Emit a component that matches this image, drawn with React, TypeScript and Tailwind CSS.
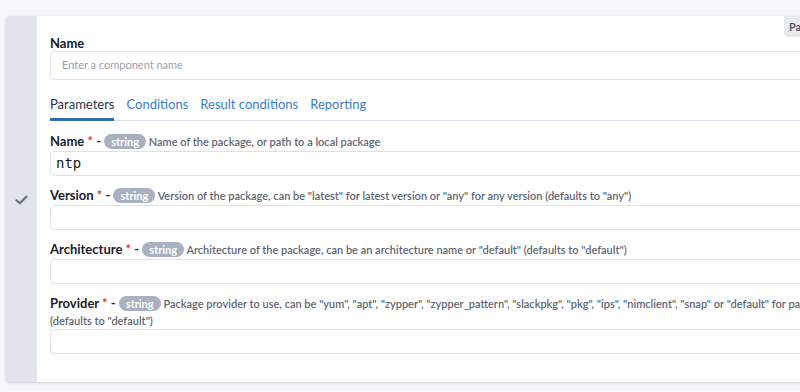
import React from 'react';

type Param = {
  name: string;
  description: string;
  defaults?: string;
  value?: string;
};

const params: Param[] = [
  { name: 'Name', description: 'Name of the package, or path to a local package', value: 'ntp' },
  { name: 'Version', description: 'Version of the package, can be "latest" for latest version or "any" for any version', defaults: '(defaults to "any")' },
  { name: 'Architecture', description: 'Architecture of the package, can be an architecture name or "default"', defaults: '(defaults to "default")' },
  {
    name: 'Provider',
    description:
      'Package provider to use, can be "yum", "apt", "zypper", "zypper_pattern", "slackpkg", "pkg", "ips", "nimclient", "snap" or "default" for package',
    defaults: '(defaults to "default")',
  },
];

const tabs = ['Parameters', 'Conditions', 'Result conditions', 'Reporting'];

const CheckIcon = () => (
  <svg width="13" height="10" viewBox="0 0 13 10" fill="none">
    <path d="M1.5 5.2 L4.8 8.3 L11.5 1.6" stroke="#6b7280" strokeWidth="2.2" strokeLinecap="round" strokeLinejoin="round" />
  </svg>
);

const ParamField = ({ param }: { param: Param }) => (
  <div className="flex flex-col">
    <div className="w-[820px] text-[11px] leading-[16px] text-[#5f6673] font-semibold">
      <span className="text-[13px] leading-[19px] font-bold text-[#1b212b]">{param.name}</span>
      <span className="text-[13px] leading-[19px] font-bold text-[#e8372d]"> *</span>
      <span className="text-[13px] leading-[19px] font-bold text-[#1b212b]"> - </span>
      <span className="inline-block rounded-full bg-[#a8b0c1] px-[7px] text-[11px] leading-[15px] font-bold text-white">
        string
      </span>{' '}
      {param.description}
      {param.defaults && (
        <>
          {' '}
          <span className="whitespace-nowrap">{param.defaults}</span>
        </>
      )}
    </div>
    <div className="flex h-[25px] w-full items-center rounded-[4px] border border-[#d9e0ee] bg-white px-[5px]">
      {param.value && (
        <span className="font-['DejaVu_Sans_Mono',monospace] text-[14px] text-[#1b212b]">{param.value}</span>
      )}
    </div>
  </div>
);

export default function App() {
  return (
    <div className="h-[392px] w-[800px] overflow-hidden bg-[#f6f7fa] font-['Lato','Noto_Sans',sans-serif]">
      <div className="relative ml-[6px] mt-[16px] flex w-[1000px] rounded-tl-[3px] rounded-bl-[3px] shadow-[0_1px_3px_rgba(120,130,160,0.35)]">
        {/* status strip */}
        <div className="flex w-[31px] shrink-0 items-center justify-center rounded-l-[3px] bg-[#e1e4eb] pt-[2px]">
          <CheckIcon />
        </div>

        <div className="flex flex-1 flex-col bg-white pl-[13px] pr-[40px] pt-[19px] pb-[28px]">
          <label className="text-[13px] font-bold leading-[16px] text-[#1b212b]">Name</label>
          <div className="flex h-[29px] items-center rounded-[4px] border border-[#d9e0ee] px-[11px]">
            <span className="text-[11px] text-[#9aa0a9]">Enter a component name</span>
          </div>

          <div className="mt-[15px] flex gap-[12px] border-b border-[#dbe2ef]">
            {tabs.map((t, i) => (
              <div
                key={t}
                className={`-mb-[1px] pb-[5px] text-[13px] leading-[18px] ${
                  i === 0 ? 'border-b-[3px] border-[#2e6eab] text-[#2c333d]' : 'border-b-[3px] border-transparent text-[#3a7dc1]'
                }`}
              >
                {t}
              </div>
            ))}
          </div>

          <div className="mt-[11px] flex flex-col gap-[10px]">
            {params.map(p => (
              <ParamField key={p.name} param={p} />
            ))}
          </div>
        </div>

        <div className="absolute left-[778px] top-0 h-[21px] rounded-bl-[4px] bg-[#e8eaee] px-[5px] text-[11px] leading-[21px] font-semibold text-[#4b5260]">
          Parameters
        </div>
      </div>
    </div>
  );
}
